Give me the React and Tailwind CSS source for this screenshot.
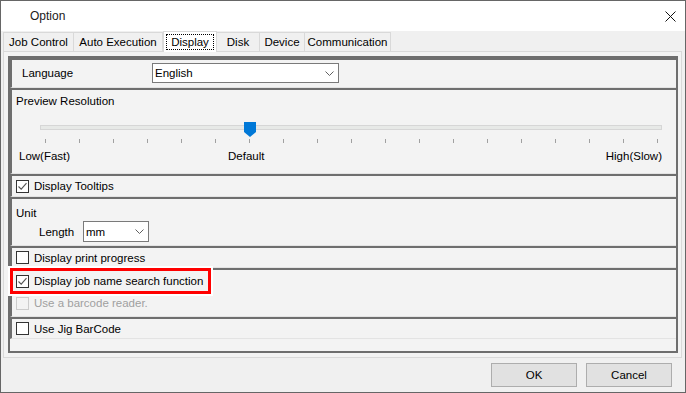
import React from "react";

const tabs = [
  { label: "Job Control", w: "w-[71px]" },
  { label: "Auto Execution", w: "w-[89px]" },
  { label: "Display", w: "w-[54px]", active: true },
  { label: "Disk", w: "w-[43px]" },
  { label: "Device", w: "w-[45px]" },
  { label: "Communication", w: "w-[86px]" },
];

function Chevron() {
  return (
    <svg width="9" height="5" viewBox="0 0 9 5" className="shrink-0">
      <path d="M0.5 0.5 L4.5 4.5 L8.5 0.5" fill="none" stroke="#606060" strokeWidth="1" />
    </svg>
  );
}

function Select({ value, className }) {
  return (
    <div
      className={`flex items-center justify-between h-[20px] bg-white border border-[#7a7a7a] pl-[2px] pr-[4px] ${className}`}
    >
      <span>{value}</span>
      <Chevron />
    </div>
  );
}

function Check({ checked, disabled }) {
  return (
    <div
      className={`w-[13px] h-[13px] shrink-0 border flex items-center justify-center ${
        disabled ? "border-[#cccccc] bg-[#f3f3f3]" : "border-[#333333] bg-white"
      }`}
    >
      {checked && (
        <svg width="11" height="11" viewBox="0 0 11 11">
          <path d="M1.5 5.5 L4.2 8.2 L9.5 2.2" fill="none" stroke="#555555" strokeWidth="1.1" />
        </svg>
      )}
    </div>
  );
}

function CheckRow({ label, checked, disabled, className = "" }) {
  return (
    <div className={`flex items-center gap-[5px] pl-[4px] ${className}`}>
      <Check checked={checked} disabled={disabled} />
      <span className={disabled ? "text-[#a0a0a0]" : ""}>{label}</span>
    </div>
  );
}

function Section({ h, className = "", children }) {
  return (
    <div
      className={`relative ${h} border-t-2 border-l-2 border-[#6e6e6e] border-b border-b-[#e3e3e3] ${className}`}
    >
      {children}
    </div>
  );
}

export default function App() {
  const ticks = Array.from({ length: 19 });

  return (
    <div
      className="w-[686px] h-[393px] border border-[#666666] bg-[#f0f0f0] flex flex-col text-[11.5px] leading-[14px] text-black overflow-hidden"
      style={{ fontFamily: '"Liberation Sans", Arial, sans-serif' }}
    >
      {/* title bar */}
      <div className="h-[30px] bg-white flex items-center justify-between pl-[29px] pr-[9px] shrink-0">
        <span className="text-[12px] text-[#1a1a1a]">Option</span>
        <svg width="11" height="11" viewBox="0 0 11 11">
          <path d="M0.5 0.5 L10.5 10.5 M10.5 0.5 L0.5 10.5" stroke="#111" strokeWidth="1" />
        </svg>
      </div>

      {/* tabs */}
      <div className="h-[20px] flex items-end pl-[2px] shrink-0 relative z-10">
        {tabs.map((t) =>
          t.active ? (
            <div
              key={t.label}
              className={`${t.w} h-[21px] -mb-px bg-white border border-b-0 border-[#d9d9d9] flex items-center justify-center`}
            >
              <span className="border border-dotted border-black px-[4px] leading-[14px]">
                {t.label}
              </span>
            </div>
          ) : (
            <div
              key={t.label}
              className={`${t.w} h-[19px] bg-[#f0f0f0] border border-b-0 border-l-0 first:border-l border-[#d9d9d9] flex items-center justify-center`}
            >
              {t.label}
            </div>
          )
        )}
      </div>

      {/* tab panel */}
      <div className="ml-[2px] mr-[3px] h-[307px] border border-[#d9d9d9] bg-[#f3f3f3] pt-[4px] pl-[4px] pr-[3px] pb-[4px] shrink-0">
        <div className="h-full border-2 border-[#6e6e6e] flex flex-col">
          <Section h="h-[30px]" className="flex items-start pt-[3px] pl-[10px]">
            <span className="w-[130px] leading-[20px]">Language</span>
            <Select value="English" className="w-[187px]" />
          </Section>

          <Section h="h-[86px]">
            <div className="mt-[4px] pl-[4px]">Preview Resolution</div>
            <div className="relative ml-[28px] w-[622px] h-[5px] mt-[17px] border border-[#d6d6d6] bg-[#e7e9e7]">
              <svg
                width="12"
                height="15"
                viewBox="0 0 12 15"
                className="absolute left-[203px] top-[-4px]"
              >
                <polygon points="0,0 12,0 12,10 6,15 0,10" fill="#0078d7" />
              </svg>
            </div>
            <div className="ml-[33px] w-[613px] mt-[9px] flex justify-between">
              {ticks.map((_, i) => (
                <div key={i} className="w-px h-[4px] bg-[#a0a0a0]" />
              ))}
            </div>
            <div className="flex mt-[6px] pl-[7px] pr-[14px]">
              <span className="w-[209px]">Low(Fast)</span>
              <span>Default</span>
              <span className="flex-1" />
              <span>High(Slow)</span>
            </div>
          </Section>

          <Section h="h-[23px]" className="flex items-center">
            <CheckRow label="Display Tooltips" checked />
          </Section>

          <Section h="h-[49px]">
            <div className="mt-[7px] pl-[4px]">Unit</div>
            <div className="flex items-center mt-[1px] pl-[27px]">
              <span className="w-[44px]">Length</span>
              <Select value="mm" className="w-[66px] h-[21px]" />
            </div>
          </Section>

          <Section h="h-[22px]" className="flex items-center">
            <CheckRow label="Display print progress" />
          </Section>

          <Section h="h-[49px]">
            <CheckRow label="Display job name search function" checked className="mt-[4px]" />
            <CheckRow label="Use a barcode reader." disabled className="mt-[8px]" />
            <div className="absolute top-[-2px] left-[-2px] w-[201px] h-[26px] border-[3px] border-[#ff0000] outline-2 outline-white" />
          </Section>

          <Section h="h-[22px]" className="flex items-center">
            <CheckRow label="Use Jig BarCode" />
          </Section>
        </div>
      </div>

      {/* footer */}
      <div className="flex justify-end gap-[9px] pt-[5px] pr-[13px]">
        <button className="w-[86px] h-[24px] bg-[#e1e1e1] border border-[#adadad]">OK</button>
        <button className="w-[86px] h-[24px] bg-[#e1e1e1] border border-[#adadad]">Cancel</button>
      </div>
    </div>
  );
}
